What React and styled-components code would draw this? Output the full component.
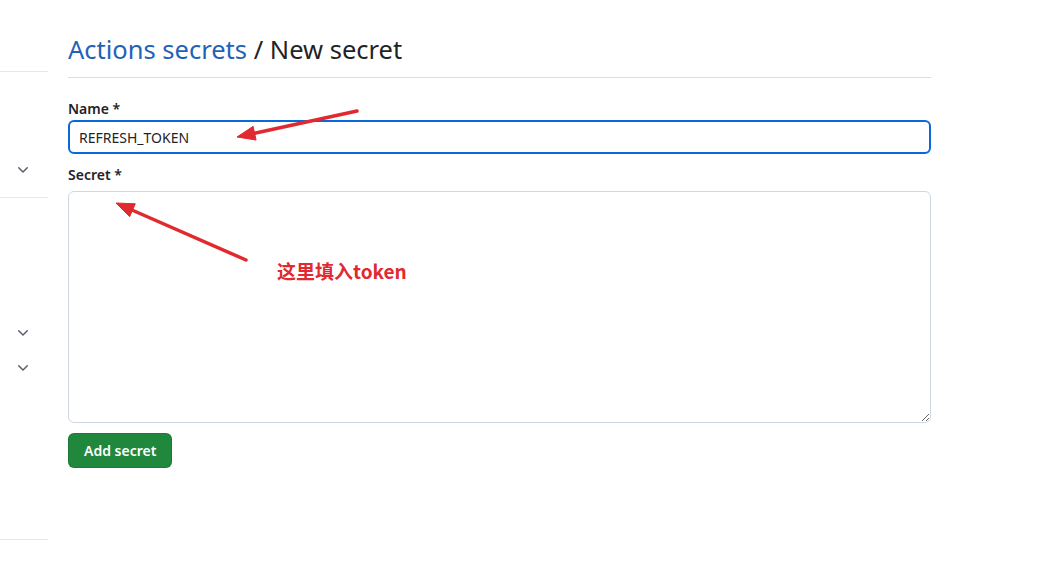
import styled, { createGlobalStyle } from 'styled-components';

const GlobalStyle = createGlobalStyle`
  body {
    margin: 0;
    background: #ffffff;
    font-family: "Segoe UI", "Noto Sans", "Noto Sans CJK SC", sans-serif;
    color: #1f2328;
  }
`;

const Page = styled.div`
  position: relative;
  display: flex;
  gap: 20px;
  width: 1051px;
  height: 583px;
  overflow: hidden;
`;

const Sidebar = styled.aside`
  width: 48px;
  flex-shrink: 0;
  display: flex;
  flex-direction: column;
`;

const SideSection = styled.div`
  height: ${(p) => p.$h}px;
  border-bottom: 1px solid #e6e8eb;
  display: flex;
  flex-direction: column;
  padding-top: ${(p) => p.$pt || 0}px;
  box-sizing: border-box;
`;

const SideRow = styled.div`
  height: 35px;
  display: flex;
  align-items: center;
  justify-content: flex-end;
  padding-right: 17px;
  color: #57606a;
`;

const Main = styled.main`
  width: 863px;
  padding-top: 30px;
`;

const Heading = styled.h2`
  margin: 0 0 21px;
  padding-bottom: 8px;
  border-bottom: 1px solid #d8dee4;
  font-size: 25.5px;
  font-weight: 400;
  line-height: 39px;
  color: #1f2328;
`;

const Crumb = styled.a`
  color: #1f62b8;
  text-decoration: none;
`;

const Label = styled.label`
  display: block;
  font-size: 14px;
  font-weight: 600;
  line-height: 20px;
  margin-bottom: 1px;
`;

const Field = styled.div`
  margin-bottom: ${(p) => p.$mb || 0}px;
`;

const Input = styled.input`
  box-sizing: border-box;
  display: block;
  width: 100%;
  height: 34px;
  padding: 0 9px;
  font: inherit;
  font-size: 14px;
  color: #1f2328;
  border: 2px solid #0969da;
  border-radius: 6px;
  outline: none;
`;

const TextArea = styled.textarea`
  box-sizing: border-box;
  display: block;
  width: 100%;
  height: 232px;
  margin-top: 6px;
  border: 1px solid #d0d7de;
  border-radius: 6px;
  font: inherit;
  outline: none;
`;

const Button = styled.button`
  height: 35px;
  padding: 0 15px;
  background: #1f883d;
  color: #ffffff;
  border: 1px solid rgba(31, 35, 40, 0.15);
  border-radius: 6px;
  font: inherit;
  font-size: 14px;
  font-weight: 600;
`;

const Overlay = styled.svg`
  position: absolute;
  left: 0;
  top: 0;
  pointer-events: none;
`;

const Note = styled.span`
  position: absolute;
  left: 277px;
  top: 257px;
  font-size: 19px;
  font-weight: 700;
  color: #e02a2f;
  font-family: "Noto Sans CJK SC", "Noto Sans", sans-serif;
`;

function Chevron() {
  return (
    <svg width="16" height="16" viewBox="0 0 16 16" fill="currentColor">
      <path d="M12.78 5.22a.749.749 0 0 1 0 1.06l-4.25 4.25a.749.749 0 0 1-1.06 0L3.22 6.28a.749.749 0 1 1 1.06-1.06L8 8.939l3.72-3.719a.749.749 0 0 1 1.06 0Z" />
    </svg>
  );
}

function Arrow({ x1, y1, x2, y2 }) {
  const a = Math.atan2(y2 - y1, x2 - x1);
  const len = 18;
  const w = 7;
  const bx = x2 - len * Math.cos(a);
  const by = y2 - len * Math.sin(a);
  const px = -Math.sin(a) * w;
  const py = Math.cos(a) * w;
  return (
    <g fill="#e02a2f" stroke="#e02a2f">
      <line x1={x1} y1={y1} x2={bx} y2={by} strokeWidth="3.5" strokeLinecap="round" />
      <polygon points={`${x2},${y2} ${bx + px},${by + py} ${bx - px},${by - py}`} strokeWidth="1" />
    </g>
  );
}

export default function App() {
  return (
    <>
      <GlobalStyle />
      <Page>
        <Sidebar>
          <SideSection $h={72} />
          <SideSection $h={126} $pt={80}>
            <SideRow><Chevron /></SideRow>
          </SideSection>
          <SideSection $h={342} $pt={117}>
            <SideRow><Chevron /></SideRow>
            <SideRow><Chevron /></SideRow>
          </SideSection>
        </Sidebar>
        <Main>
          <Heading>
            <Crumb href="#">Actions secrets</Crumb> / New secret
          </Heading>
          <Field $mb={11}>
            <Label>Name *</Label>
            <Input defaultValue="REFRESH_TOKEN" />
          </Field>
          <Field $mb={10}>
            <Label>Secret *</Label>
            <TextArea />
          </Field>
          <Button>Add secret</Button>
        </Main>
        <Overlay width="1051" height="583">
          <Arrow x1={357} y1={111} x2={237} y2={137} />
          <Arrow x1={246} y1={260} x2={116} y2={203} />
        </Overlay>
        <Note>这里填入token</Note>
      </Page>
    </>
  );
}
